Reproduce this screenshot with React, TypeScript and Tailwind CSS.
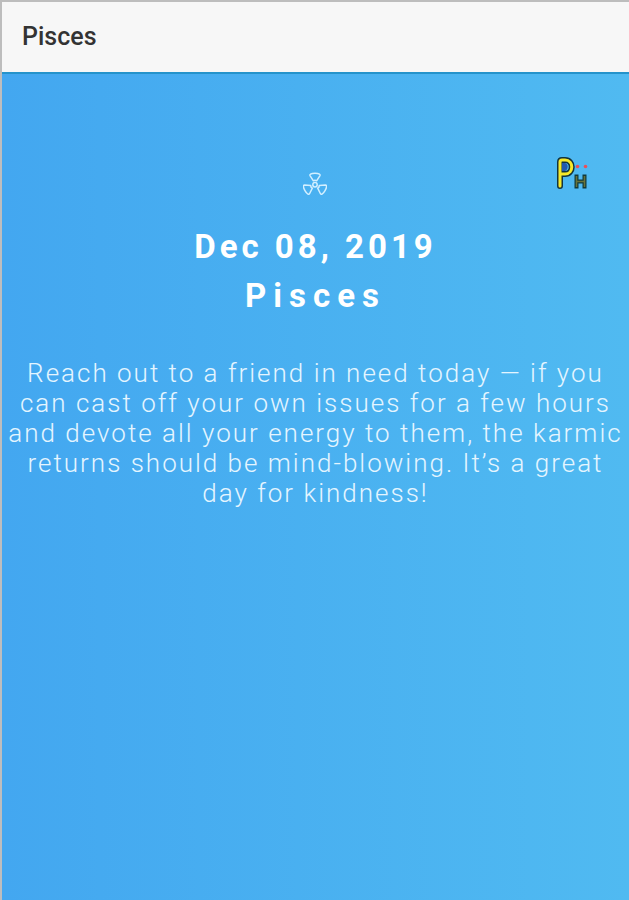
const today = {
  sign: 'Pisces',
  date: 'Dec 08, 2019',
  text: 'Reach out to a friend in need today — if you can cast off your own issues for a few hours and devote all your energy to them, the karmic returns should be mind-blowing. It’s a great day for kindness!',
}

const BLADE = 'M10.4 8.8 7 3.6C6.4 2.6 7.4 1.2 12 1.2C16.6 1.2 17.6 2.6 17 3.6L13.6 8.8C13 8.4 11 8.4 10.4 8.8Z'

function TrefoilIcon() {
  return (
    <svg viewBox="0 0 24 24" className="w-6 h-6" fill="none" stroke="#d3efff" strokeWidth="1.5" strokeLinejoin="round" aria-hidden="true">
      <circle cx="12" cy="12.8" r="2.2" />
      <path d={BLADE} />
      <path d={BLADE} transform="rotate(120 12 12.8)" />
      <path d={BLADE} transform="rotate(240 12 12.8)" />
    </svg>
  )
}

function PhLogo() {
  return (
    <svg viewBox="0 0 34 36" className="w-[34px] h-9" fill="none" strokeLinejoin="round" role="img" aria-label="PH">
      <path d="M5 30V6Q5 4 7 4H10C19 4 19 18 10 18H6" stroke="#14343d" strokeWidth="6" strokeLinecap="round" />
      <path d="M7 7H10C14 8 13 14 10 15H7Z" fill="#2458ad" />
      <path d="M5 30V6Q5 4 7 4H10C19 4 19 18 10 18H6" stroke="#f7e92b" strokeWidth="3" strokeLinecap="round" />
      <path d="M21.5 18.5V32.5M29.5 18.5V32.5M20 25.5H31" stroke="#123a3c" strokeWidth="4" />
      <path d="M21.5 20V31M29.5 20V31M21.5 25.5H29.5" stroke="#68733a" strokeWidth="1.6" />
      <circle cx="22.5" cy="10.5" r="1.8" fill="#e8505a" />
      <circle cx="30.5" cy="10.5" r="1.8" fill="#e8505a" />
    </svg>
  )
}

export default function App() {
  return (
    <div className="min-h-screen flex flex-col border-t-2 border-l-2 border-[#bdbdbd] font-['Roboto',sans-serif]">
      <header className="h-[72px] shrink-0 flex items-center px-5 bg-[#f7f7f7] border-b-2 border-[#2593cb]">
        <p className="text-[25px] font-medium text-[#333]">{today.sign}</p>
      </header>

      <main className="flex-1 flex flex-col bg-linear-to-r from-[#43a7f0] to-[#50baf1] text-white text-center">
        {/* Icon row, logo on the right */}
        <div className="grid grid-cols-3 items-start pt-[82px] px-10">
          <span />
          <div className="flex justify-center pt-4">
            <TrefoilIcon />
          </div>
          <div className="flex justify-end">
            <PhLogo />
          </div>
        </div>

        <h1 className="mt-[26px] text-[33px] leading-[49px] font-bold tracking-[4px]">{today.date}</h1>
        <h2 className="text-[33px] leading-[49px] font-bold tracking-[7px]">{today.sign}</h2>

        <p className="mt-[38px] px-1 text-[26px] leading-[30px] font-light tracking-[2px] text-[#e4f5ff]">{today.text}</p>
      </main>
    </div>
  )
}
